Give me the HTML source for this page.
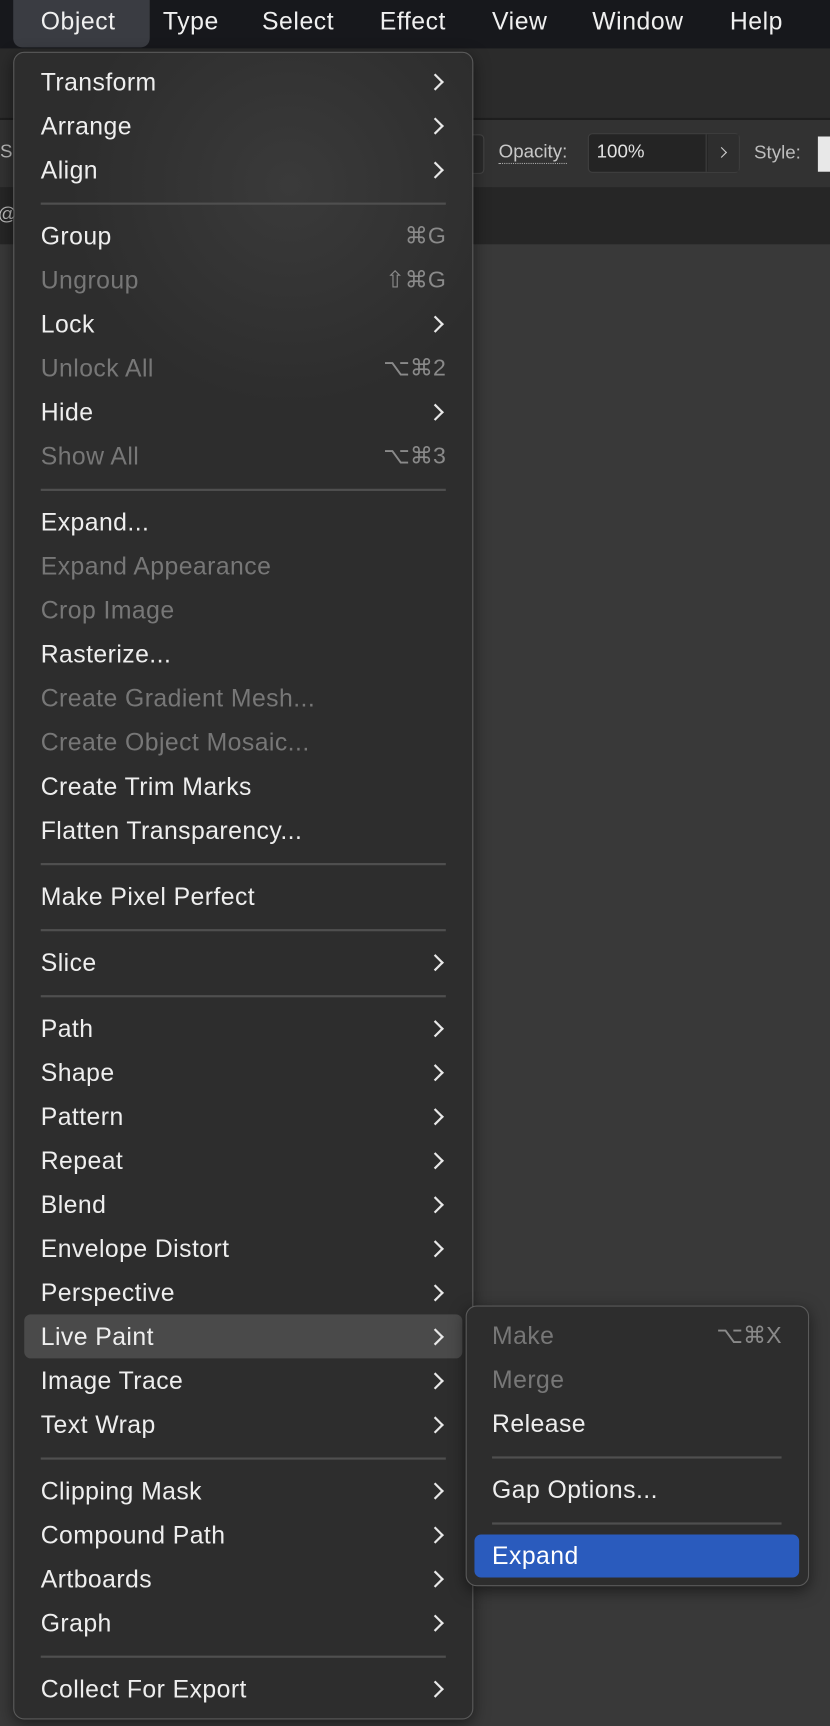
<!DOCTYPE html>
<html><head><meta charset="utf-8"><style>
html,body{margin:0;padding:0;width:830px;height:1726px;overflow:hidden;background:#383838;}
#w{position:absolute;left:0;top:0;width:754px;height:1568px;transform:scale(1.10080);transform-origin:0 0;font-family:"Liberation Sans","DejaVu Sans",sans-serif;}
.abs{position:absolute;}
#bar{left:0;top:0;width:754px;height:44px;background:#17181c;}
#bar span{position:absolute;top:7px;font-size:22.5px;letter-spacing:0.5px;color:#f0f0f0;}
#objhl{left:12px;top:0;width:124px;height:43px;background:#3a3c42;border-radius:0 0 8px 8px;}
.menu{background:#2d2d2d;border:1px solid #5a5a5a;border-radius:10px;box-shadow:0 4px 14px rgba(0,0,0,.5);box-sizing:border-box;}
.it{position:absolute;height:40px;line-height:40px;font-size:22.5px;letter-spacing:0.4px;color:#eeeeee;white-space:nowrap;}
.dis{color:#777;}
.chev{position:absolute;width:9px;height:9px;border-right:2px solid #e8e8e8;border-top:2px solid #e8e8e8;transform:rotate(45deg);}
.sc{position:absolute;font-size:21px;color:#8a8a8a;line-height:40px;text-align:right;}
.sep{position:absolute;height:2px;background:#4f4f4f;}
</style></head><body><div id="w">
<div class="abs" style="left:0;top:44px;width:754px;height:63px;background:#2b2b2b;"></div>
<div class="abs" style="left:0;top:107px;width:754px;height:2px;background:#1e1e1e;"></div>
<div class="abs" style="left:0;top:109px;width:754px;height:61px;background:#323232;"></div>
<div class="abs" style="left:0;top:170px;width:754px;height:52px;background:#262626;"></div>
<div class="abs" style="left:0;top:222px;width:754px;height:1346px;background:#393939;"></div>
<div class="abs" style="left:0;top:128px;font-size:17px;color:#bbb;">S</div>
<div class="abs" style="left:-2px;top:185px;font-size:17px;color:#bbb;">@</div>
<div class="abs" style="left:380px;top:122px;width:58px;height:34px;border:1px solid #444;border-radius:4px;background:#2a2a2a;"></div>
<div class="abs" style="left:453px;top:128px;font-size:17px;color:#c8c8c8;border-bottom:1px dotted #aaa;line-height:20px;">Opacity:</div>
<div class="abs" style="left:534px;top:121px;width:138px;height:36px;border:1px solid #3f3f3f;border-radius:4px;background:#242424;box-sizing:border-box;"></div>
<div class="abs" style="left:641px;top:122px;width:1px;height:34px;background:#3f3f3f;"></div>
<div class="abs" style="left:643px;top:122px;width:28px;height:34px;background:#2e2e2e;"></div>
<div class="abs" style="left:542px;top:128px;font-size:17px;color:#e0e0e0;">100%</div>
<div class="abs" style="left:652px;top:135px;width:6px;height:6px;border-right:1.5px solid #ccc;border-top:1.5px solid #ccc;transform:rotate(45deg);"></div>
<div class="abs" style="left:685px;top:129px;font-size:17px;color:#bdbdbd;">Style:</div>
<div class="abs" style="left:743px;top:124px;width:11px;height:32px;background:#e8e8e8;"></div>

<div id="bar" class="abs">
<div id="objhl" class="abs"></div>
<span style="left:37px">Object</span><span style="left:148px">Type</span><span style="left:238px">Select</span><span style="left:345px">Effect</span><span style="left:447px">View</span><span style="left:538px">Window</span><span style="left:663px">Help</span>
</div>

<div class="abs menu" style="left:12px;top:47px;width:418px;height:1515px;background:radial-gradient(circle at 250px 120px,#3a3a3a 0,#2d2d2d 200px);"></div>
<div class="abs" style="left:22px;top:1194px;width:398px;height:40px;background:#4a4a4a;border-radius:6px;"></div>
<div id="items"></div>

<div class="abs menu" style="left:423px;top:1186px;width:312px;height:255px;"></div>
<div class="abs" style="left:431px;top:1394px;width:295px;height:39px;background:#2a5bbd;border-radius:6px;"></div>
<div class="it dis" style="left:447px;top:1194px">Make</div><div class="sc" style="left:600px;width:110px;top:1194px">⌥⌘X</div>
<div class="it dis" style="left:447px;top:1234px">Merge</div>
<div class="it" style="left:447px;top:1274px">Release</div>
<div class="sep" style="left:447px;width:263px;top:1323px"></div>
<div class="it" style="left:447px;top:1334px">Gap Options...</div>
<div class="sep" style="left:447px;width:263px;top:1383px"></div>
<div class="it" style="left:447px;top:1394px;color:#fff">Expand</div>
</div>
<script>
var rows=[["Transform",">"],["Arrange",">"],["Align",">"],"-",["Group","⌘G"],["Ungroup","⇧⌘G",1],["Lock",">"],["Unlock All","⌥⌘2",1],["Hide",">"],["Show All","⌥⌘3",1],"-",["Expand..."],["Expand Appearance","",1],["Crop Image","",1],["Rasterize..."],["Create Gradient Mesh...","",1],["Create Object Mosaic...","",1],["Create Trim Marks"],["Flatten Transparency..."],"-",["Make Pixel Perfect"],"-",["Slice",">"],"-",["Path",">"],["Shape",">"],["Pattern",">"],["Repeat",">"],["Blend",">"],["Envelope Distort",">"],["Perspective",">"],["Live Paint",">"],["Image Trace",">"],["Text Wrap",">"],"-",["Clipping Mask",">"],["Compound Path",">"],["Artboards",">"],["Graph",">"],"-",["Collect For Export",">"]];
var y=55,h="";
rows.forEach(function(r){
 if(r=="-"){h+='<div class="sep" style="left:37px;width:368px;top:'+(y+9)+'px"></div>';y+=20;return;}
 h+='<div class="it'+(r[2]?' dis':'')+'" style="left:37px;top:'+y+'px">'+r[0]+'</div>';
 if(r[1]==">")h+='<div class="chev" style="left:390px;top:'+(y+14)+'px"></div>';
 else if(r[1])h+='<div class="sc" style="left:300px;width:105px;top:'+y+'px">'+r[1]+'</div>';
 y+=40;
});
document.getElementById("items").innerHTML=h;
</script>
</body></html>
